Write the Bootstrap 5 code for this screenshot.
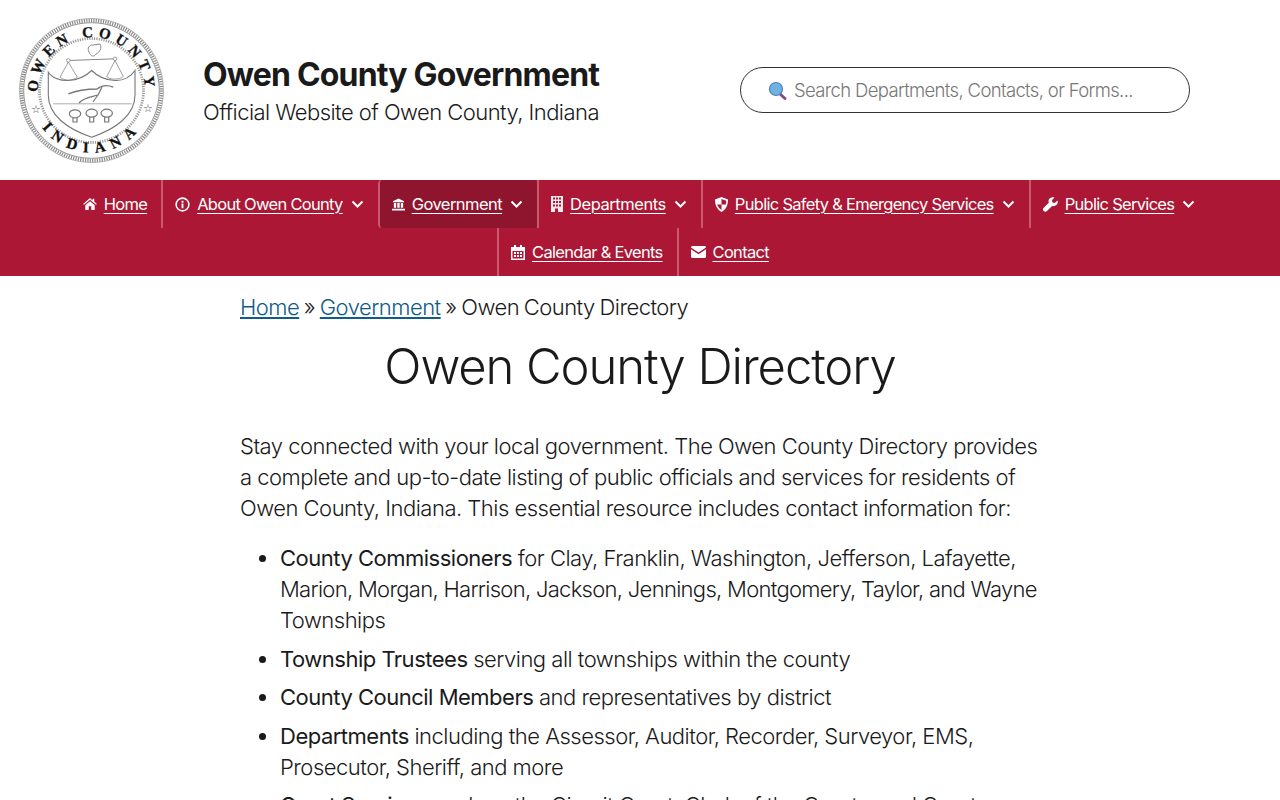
<!DOCTYPE html>
<html lang="en"><head><meta charset="utf-8"><title>Owen County Directory</title>
<link rel="stylesheet" href="https://cdn.jsdelivr.net/npm/bootstrap@5.3.0/dist/css/bootstrap.min.css">
<style>
body{font-family:Inter,"Liberation Sans",sans-serif;color:#1a1a1a;font-weight:300;overflow-x:hidden}
.site-head{height:180px;padding-left:18px}
.seal{width:147px;height:147px;flex:none}
.brand{margin-left:38px;width:537px}
.brand-name{font-size:32px;font-weight:700;letter-spacing:-.82px;line-height:40px;margin:1px 0 0}
.brand-sub{font-size:22px;line-height:30px;letter-spacing:-.55px;font-weight:300;margin:2px 0 0}
.search-box{width:450px;height:46px;border:1px solid #333;border-radius:23px;padding:1px 0 0 27px;font-size:18.5px;letter-spacing:-.65px;color:#777;gap:6px}
.mainbar{background:#ab1734}
.mainbar a{color:#fff}
.mitem{height:48px;border-left:2px solid #c9596e;padding:0 14px 0 12px;gap:7px;font-size:16.5px;letter-spacing:-.7px;font-weight:400;color:#fff}
.mitem.first{border-left:0}
.mitem.on{background:#8f142d;border-radius:4px}
.mitem svg{flex:none}
.mitem a{text-underline-offset:3px;text-decoration-thickness:1px}
.mitem.wide-a{letter-spacing:-.45px}
.mitem.wide-b{letter-spacing:-.55px}
.chev{margin-left:1px}
.page-body{width:800px;font-size:22px;line-height:30.8px;letter-spacing:-.5px}
.crumbs{padding-top:16px;line-height:30px;letter-spacing:-.52px;word-spacing:-1px}
.crumbs a{color:#0f5c86}
.page-title{font-size:49px;font-weight:300;text-align:center;letter-spacing:-1.1px;word-spacing:normal;line-height:60px;margin:15px 0 34px}
.page-body p{margin-bottom:20px}
.page-body ul{padding-left:40px;margin:0}
.page-body li{margin-bottom:7.8px;letter-spacing:-.5px}
.page-body b{font-weight:400}
.tight-run{letter-spacing:-.7px}
</style></head><body>
<header class="site-head d-flex align-items-center">
<svg class="seal" viewBox="0 0 147 147" aria-hidden="true">
<defs>
<path id="arcTop" d="M20 73.500A53.500 53.500 0 0 1 127 73.500"/>
<path id="arcBot" d="M13 85A61.500 61.500 0 0 0 134 85"/>
</defs>
<circle cx="73.500" cy="73.500" r="70" fill="none" stroke="#888" stroke-width="3.500" stroke-dasharray="1.200 1.200"/>
<circle cx="73.500" cy="73.500" r="67.800" fill="none" stroke="#666" stroke-width=".7"/>
<circle cx="73.500" cy="73.500" r="72" fill="none" stroke="#888" stroke-width=".6"/>
<circle cx="73.500" cy="73.500" r="52" fill="none" stroke="#999" stroke-width="2.800" stroke-dasharray="1.200 1.200"/>
<text font-family="Liberation Serif,serif" font-weight="700" font-size="15" letter-spacing="5" fill="#111" stroke="#111" stroke-width=".3"><textPath href="#arcTop" startOffset="50%" text-anchor="middle">OWEN COUNTY</textPath></text>
<text font-family="Liberation Serif,serif" font-weight="700" font-size="15" letter-spacing="7" fill="#111" stroke="#111" stroke-width=".3"><textPath href="#arcBot" startOffset="50%" text-anchor="middle">INDIANA</textPath></text>
<text x="18" y="96" font-size="11" fill="#555" text-anchor="middle" font-family="DejaVu Sans">☆</text>
<text x="130" y="95" font-size="11" fill="#555" text-anchor="middle" font-family="DejaVu Sans">☆</text>
<path d="M30.300 55.200C34 61 43 64 50.300 63.500C60 63 68 59 73.700 53.500C79 59 88 63 97 63.500C105 64 113 60 117 53.500V78C117 98 98 112 73.700 120.200C49 112 30.300 98 30.300 78Z" fill="none" stroke="#777" stroke-width="1.100"/>
<path d="M35.300 86.800H113.700" stroke="#999" stroke-width=".8"/>
<path d="M50.300 43.500L97 41.800" stroke="#888" stroke-width="1" fill="none"/>
<circle cx="50.300" cy="43.500" r="1.800" fill="#fff" stroke="#888" stroke-width=".8"/><circle cx="97" cy="41.800" r="1.800" fill="#fff" stroke="#888" stroke-width=".8"/>
<path d="M50.300 45L42 60.200C46 64 55 64 59.300 60.200ZM97 43.500L88.700 59.500C92 63 101 63 105.300 59.500Z" fill="none" stroke="#888" stroke-width=".8"/>
<path d="M71 35C69 31 71 28 75 28L82 27C84 31 82 35 78 37C76 40 73 40 71 35Z" fill="none" stroke="#888"/>
<path d="M50.300 76.800C60 73 72 72 79 72C84 68 90 68 95.300 70.200" fill="none" stroke="#777" stroke-width="1.400"/>
<path d="M61 86C66 80 74 80 80 78L84 70M80 78L75 85" fill="none" stroke="#777" stroke-width="1.200"/>
<g fill="none" stroke="#777" stroke-width="1.200"><ellipse cx="57" cy="96.800" rx="5.700" ry="4"/><ellipse cx="73.700" cy="96.200" rx="5.700" ry="4"/><ellipse cx="88.700" cy="96.200" rx="5.700" ry="4"/><path d="M55 101v4h4v-4M71.700 100v5h4v-5M86.700 100v5h4v-5"/></g>
</svg>
<div class="brand">
<h1 class="brand-name">Owen County Government</h1>
<p class="brand-sub">Official Website of Owen County, Indiana</p>
</div>
<div class="search-box d-flex align-items-center">
<svg width="20" height="20" viewBox="0 0 20 20" aria-hidden="true"><path d="M11.500 12.500l5.500 5" stroke="#8a4a8a" stroke-width="3" stroke-linecap="round"/><circle cx="8" cy="8" r="6.500" fill="#6fb1e0" stroke="#4a86b5" stroke-width="1.200"/></svg>
<span>Search Departments, Contacts, or Forms...</span>
</div>
</header>
<nav class="mainbar d-flex flex-wrap justify-content-center">
<div class="mitem first d-flex align-items-center"><svg width="14" height="12" viewBox="0 0 16 14" fill="#fff"><path d="M8 0L0 7l1 1 7-6 7 6 1-1-3-2.600V1h-2v1.800zM2.500 8.500L8 3.800l5.500 4.700V14H9.500V9.500h-3V14h-4z"/></svg><a href="#">Home</a></div>
<div class="mitem d-flex align-items-center"><svg width="15" height="15" viewBox="0 0 16 16"><circle cx="8" cy="8" r="6.800" fill="none" stroke="#fff" stroke-width="1.700"/><path d="M7 7h2v5H7zM7 4h2v2H7z" fill="#fff"/></svg><a href="#">About Owen County</a><svg class="chev" width="13" height="8" viewBox="0 0 13 8"><path d="M1.500 1.500l5 5 5-5" fill="none" stroke="#fff" stroke-width="2"/></svg></div>
<div class="mitem on wide-b d-flex align-items-center"><svg width="13" height="13" viewBox="0 0 14 13" fill="#fff"><path d="M7 0L1 3v1h12V3zM2 5h2.500v5H2zM5.750 5h2.500v5h-2.500zM9.500 5H12v5H9.500zM0 11h14v2H0z"/></svg><a href="#">Government</a><svg class="chev" width="13" height="8" viewBox="0 0 13 8"><path d="M1.500 1.500l5 5 5-5" fill="none" stroke="#fff" stroke-width="2"/></svg></div>
<div class="mitem wide-a d-flex align-items-center"><svg width="12" height="16" viewBox="0 0 12 16" fill="#fff"><path fill-rule="evenodd" opacity=".9" d="M0 0h12v16H7v-3.500H4V16H0zM2 1.500v2h2v-2zM5 1.500v2h2v-2zM8 1.500v2h2v-2zM2 5v2h2V5zM5 5v2h2V5zM8 5v2h2V5zM2 8.500v2h2v-2zM5 8.500v2h2v-2zM8 8.500v2h2v-2z"/></svg><a href="#">Departments</a><svg class="chev" width="13" height="8" viewBox="0 0 13 8"><path d="M1.500 1.500l5 5 5-5" fill="none" stroke="#fff" stroke-width="2"/></svg></div>
<div class="mitem d-flex align-items-center"><svg width="13" height="15" viewBox="0 0 13 15"><path d="M6.500 0L13 2.500C13 8 11 12.500 6.500 15 2 12.500 0 8 0 2.500z" fill="#fff"/><path d="M6.500 2L11.300 3.700C11.300 5 11.100 6.300 10.800 7.500H6.500zM6.500 7.500V13C4.200 11.500 2.900 9.700 2.200 7.500z" fill="#ab1734"/></svg><a href="#">Public Safety &amp; Emergency Services</a><svg class="chev" width="13" height="8" viewBox="0 0 13 8"><path d="M1.500 1.500l5 5 5-5" fill="none" stroke="#fff" stroke-width="2"/></svg></div>
<div class="mitem d-flex align-items-center"><svg width="15" height="15" viewBox="0 0 15 15" fill="#fff"><path d="M14.500 3.500l-2.800 2.500-2.200-.6-.6-2.200L11.500.5C9.500-.3 7 .4 6 2.300 5.400 3.500 5.400 4.600 5.800 5.700L.7 10.800c-1 1-1 2.400 0 3.300s2.400 1 3.300 0l5.100-5.100c2.600.8 5.600-1 5.700-3.700z"/></svg><a href="#">Public Services</a><svg class="chev" width="13" height="8" viewBox="0 0 13 8"><path d="M1.500 1.500l5 5 5-5" fill="none" stroke="#fff" stroke-width="2"/></svg></div>
<div class="mitem d-flex align-items-center"><svg width="14" height="15" viewBox="0 0 14 15" fill="#fff"><path fill-rule="evenodd" d="M3 0h2v2h4V0h2v2h3v13H0V2h3zM1.500 6v7.500h11V6zM3 7h2v2H3zM6 7h2v2H6zM9 7h2v2H9zM3 10h2v2H3zM6 10h2v2H6zM9 10h2v2H9z"/></svg><a href="#">Calendar &amp; Events</a></div>
<div class="mitem d-flex align-items-center"><svg width="15" height="12" viewBox="0 0 15 12" fill="#fff"><path d="M1.500 0h12c.8 0 1.500.7 1.500 1.500L7.500 6.500 0 1.500C0 .7.700 0 1.500 0zM0 3.300V10.500c0 .8.700 1.500 1.500 1.500h12c.8 0 1.500-.7 1.500-1.500V3.300L7.500 8.300z"/></svg><a href="#">Contact</a></div>
</nav>
<main class="page-body mx-auto">
<div class="crumbs"><a href="#">Home</a> » <a href="#">Government</a> » Owen County Directory</div>
<h2 class="page-title">Owen County Directory</h2>
<p>Stay connected with your local government. The Owen County Directory provides a complete and up-to-date listing of public officials and services for residents of Owen County, Indiana. This essential resource includes contact information for:</p>
<ul>
<li><b>County Commissioners</b> for Clay, Franklin, Washington, Jefferson, Lafayette, <span class="tight-run">Marion, Morgan, Harrison, Jackson, Jennings, Montgomery, Taylor, and Wayne</span> Townships</li>
<li><b>Township Trustees</b> serving all townships within the county</li>
<li><b>County Council Members</b> and representatives by district</li>
<li><b>Departments</b> including the Assessor, Auditor, Recorder, Surveyor, EMS, Prosecutor, Sheriff, and more</li>
<li><b>Court Services</b> such as the Circuit Court, Clerk of the Courts, and Court</li>
</ul>
</main>
</body></html>
